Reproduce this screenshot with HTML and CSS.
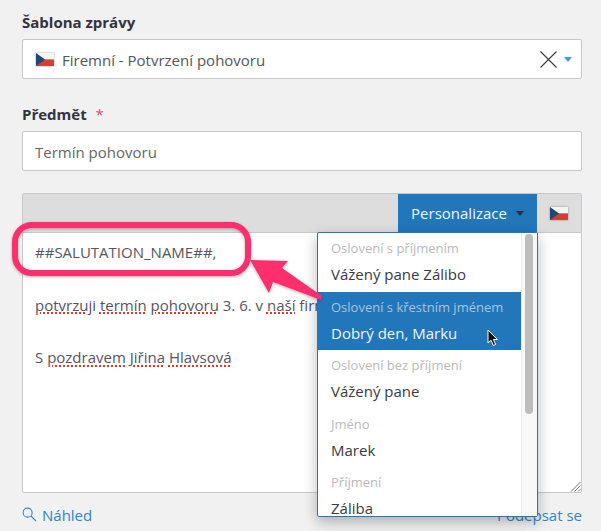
FILE: index.html
```html
<!DOCTYPE html>
<html lang="cs">
<head>
<meta charset="utf-8">
<title>Šablona zprávy</title>
<link rel="stylesheet" href="styles.css">
</head>
<body>
<main class="form">
  <div class="field">
    <label class="label">Šablona zprávy</label>
    <div class="control select">
      <svg class="flag" viewBox="0 0 18 13"><rect width="18" height="6.5" fill="#f4f4f4"/><rect y="6.5" width="18" height="6.5" fill="#cc4130"/><path d="M0 0L9 6.5L0 13Z" fill="#1d4777"/></svg>
      <span class="select-text">Firemní - Potvrzení pohovoru</span>
      <svg class="clear" viewBox="0 0 17 17"><path d="M.5.5L16.5 16.5M16.5.5L.5 16.5" stroke="#3a3a48" stroke-width="1.1" fill="none"/></svg>
      <span class="caret caret-blue"></span>
    </div>
  </div>
  <div class="field">
    <label class="label">Předmět <span class="req">*</span></label>
    <div class="control">Termín pohovoru</div>
  </div>
  <section class="editor">
    <div class="toolbar">
      <div class="personalize">Personalizace <span class="caret caret-dark"></span></div>
      <div class="lang">
        <svg class="flag" viewBox="0 0 18 13"><rect width="18" height="6.5" fill="#f4f4f4"/><rect y="6.5" width="18" height="6.5" fill="#cc4130"/><path d="M0 0L9 6.5L0 13Z" fill="#1d4777"/></svg>
      </div>
    </div>
    <div class="body">
      <p>##SALUTATION_NAME##,</p>
      <p><span class="sp">potvrzuji</span> <span class="sp">termín</span> <span class="sp">pohovoru</span> 3. 6. v <span class="sp">naší</span> firmě.</p>
      <p>S <span class="sp">pozdravem</span> <span class="sp">Jiřina</span> <span class="sp">Hlavsová</span></p>
      <svg class="grip" viewBox="0 0 11 11"><path d="M10.5 1L1 10.5M10.5 4.5L4.5 10.5M10.5 8L8 10.5" stroke="#777" fill="none"/></svg>
    </div>
  </section>
  <div class="links">
    <a class="link preview"><svg class="search" viewBox="0 0 16 16"><circle cx="6" cy="6" r="4.8" stroke="#2f86c9" stroke-width="1.1" fill="none"/><path d="M9.6 9.6L15 15" stroke="#2f86c9" stroke-width="1.2"/></svg>Náhled</a>
    <a class="link">Podepsat se</a>
  </div>

  <div class="menu">
    <div class="menu-list">
      <div class="item"><small>Oslovení s příjmením</small><span>Vážený pane Zálibo</span></div>
      <div class="item active"><small>Oslovení s křestním jménem</small><span>Dobrý den, Marku</span></div>
      <div class="item"><small>Oslovení bez příjmení</small><span>Vážený pane</span></div>
      <div class="item"><small>Jméno</small><span>Marek</span></div>
      <div class="item"><small>Příjmení</small><span>Záliba</span></div>
    </div>
    <div class="scrollbar"><div class="thumb"></div></div>
  </div>
</main>

<svg class="annotation" viewBox="0 0 601 531">
  <defs><filter id="sh" x="-10%" y="-10%" width="120%" height="130%"><feDropShadow dx="0" dy="1" stdDeviation="1.5" flood-color="#000" flood-opacity=".3"/></filter></defs>
  <g filter="url(#sh)">
    <rect x="15" y="225" width="233" height="48" rx="17" fill="none" stroke="#ff2f6e" stroke-width="6"/>
    <path d="M250 260L288 261L282 268L322 296L321 300L273 282L269 293Z" fill="#ff2f6e"/>
  </g>
</svg>
<svg class="cursor" viewBox="0 0 12 18"><path d="M1 1V14L4 11.2L6.3 16.5L8.6 15.5L6.4 10.5H10.4Z" fill="#111" stroke="#fff" stroke-width="1"/></svg>
</body>
</html>
```
FILE: styles.css
```css
* { box-sizing: border-box; }
html, body { margin: 0; height: 531px; overflow: hidden; }
body { background: #f1f1f1; font-family: "Open Sans", sans-serif; color: #3a3a48; font-size: 15px; position: relative; }
.form { padding: 13px 19px 0 22px; }
.field { margin-bottom: 26px; }
.field + .field { margin-bottom: 22px; }
.label { display: block; font-weight: 700; font-size: 15px; line-height: 19px; margin-bottom: 7px; color: #33333f; }
.req { color: #e0457b; font-weight: 400; margin-left: 5px; }
.control { height: 40px; background: #fff; border: 1px solid #c6c8cc; border-radius: 2px; padding: 1px 12px 0; display: flex; align-items: center; color: #666; font-size: 15px; }
.select { gap: 8px; color: #55555f; padding-left: 13px; }
.flag { width: 18px; height: 13px; flex: none; filter: drop-shadow(0 0 1px rgba(0,0,0,.35)); }
.select .flag, .clear, .caret-blue { margin-top: -1px; }
.select-text { flex: 1; }
.clear { width: 17px; height: 17px; flex: none; margin-right: -1px; }
.caret { display: inline-block; width: 0; height: 0; border-left: 4px solid transparent; border-right: 4px solid transparent; border-top: 5px solid; }
.caret-blue { color: #3a9be6; margin-right: -3px; }
.caret-dark { color: #2b3040; margin-left: 8px; vertical-align: middle; }
.editor { height: 300px; border: 1px solid #c6c8cc; border-radius: 2px; background: #fff; display: flex; flex-direction: column; }
.toolbar { height: 39px; background: #ddd; display: flex; justify-content: flex-end; border-bottom: 1px solid #c6c8cc; flex: none; }
.personalize { width: 139px; background: #2276ba; color: #eef5fb; display: flex; align-items: center; justify-content: center; gap: 1px; font-size: 15px; }
.lang { width: 44px; display: flex; align-items: center; justify-content: center; }
.body { flex: 1; padding: 9px 12px; position: relative; color: #55555f; font-size: 15px; line-height: 21px; }
.body p { margin: 0 0 31.5px; white-space: nowrap; max-width: 282px; overflow: hidden; padding-bottom: 4px; margin-bottom: 27.5px; }
.sp { text-decoration: underline dotted #e0352b; text-decoration-thickness: 1.5px; text-underline-offset: 2px; }
.grip { position: absolute; right: 0; bottom: 0; width: 11px; height: 11px; }
.links { display: flex; justify-content: space-between; padding-top: 13px; font-size: 15px; line-height: 19px; color: #2f86c9; }
.link { display: flex; align-items: center; }
.preview { gap: 5px; }
.search { width: 15px; height: 15px; margin-top: -2px; }
.menu { position: absolute; left: 317px; top: 232px; width: 221px; height: 285px; background: #fff; border: 1px solid #2276ba; border-radius: 2px; box-shadow: 0 5px 14px rgba(0,0,0,.28); display: flex; overflow: hidden; }
.menu-list { flex: 1; min-width: 0; }
.item { height: 58.5px; padding: 6px 13px 0; display: flex; flex-direction: column; }
.item small { font-size: 13px; line-height: 19px; color: #b9b9b9; white-space: nowrap; }
.item span { font-size: 15px; line-height: 33px; color: #3a3a48; }
.item.active { background: #2276ba; }
.item.active small { color: #a6c4de; }
.item.active span { color: #eef5fb; }
.scrollbar { width: 16px; flex: none; background: #f8f8f8; border-left: 1px solid #eaeaea; padding: 1px 3px 0; }
.thumb { height: 180px; width: 8px; background: #bdbdbd; border-radius: 4px; }
.annotation { position: absolute; left: 0; top: 0; width: 601px; height: 531px; pointer-events: none; }
.cursor { position: absolute; left: 487px; top: 329px; width: 12px; height: 18px; }
```
